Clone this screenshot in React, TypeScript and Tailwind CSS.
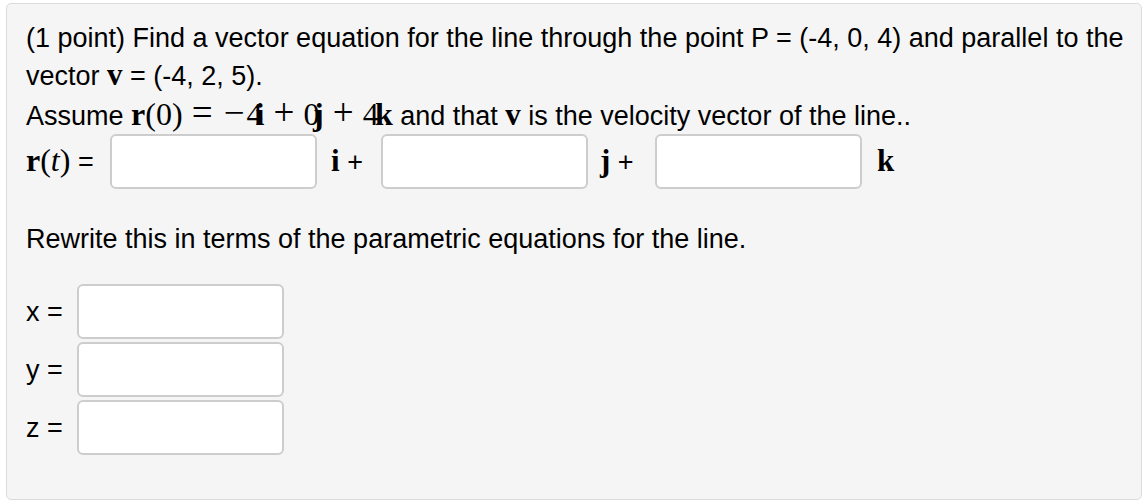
import React from "react";

const sans = { fontFamily: '"Liberation Sans", Arial, sans-serif' };
const serif = { fontFamily: '"Liberation Serif", "Times New Roman", serif' };

function AnswerBox() {
  return (
    <input
      type="text"
      className="h-[55px] w-[207px] shrink-0 rounded-[6px] border-2 border-[#cdcdcd] bg-white outline-none"
    />
  );
}

// wide math operator, roughly the TeX width
function Op({ children, space }: { children: React.ReactNode; space?: boolean }) {
  return (
    <span
      className={
        space
          ? "inline-block w-[25px] mx-[7px] text-center text-[37px] leading-[0]"
          : "inline-block w-[25px] text-center text-[37px] leading-[0]"
      }
    >
      {children}
    </span>
  );
}

function Vec({ children, className = "" }: { children: React.ReactNode; className?: string }) {
  return (
    <b className={"font-bold text-[31px] leading-none " + className} style={serif}>
      {children}
    </b>
  );
}

export default function App() {
  return (
    <div className="w-[1148px] h-[502px] bg-white pt-[3px] px-[6px] text-black" style={sans}>
      <div className="h-[497px] rounded-[5px] border border-[#dcdcdc] bg-[#f5f5f5] pl-[19px] pr-[8px] pt-[15px] text-[27px] leading-[38px]">
        <p>
          (1 point) Find a vector equation for the line through the point P = (-4, 0, 4) and parallel to the
          vector <Vec>v</Vec> = (-4, 2, 5).
        </p>
        <p className="h-[38px] pt-[2px]">
          Assume{" "}
          <span className="text-[32px] leading-none" style={serif}>
            <b>r</b>(0)
            <Op space>=</Op>
            <Op>−</Op>4<b className="-ml-[0.22em]">i</b>
            <Op space>+</Op>0<b className="-ml-[0.2em]">j</b>
            <Op space>+</Op>4<b className="-ml-[0.12em]">k</b>
          </span>{" "}
          and that <Vec>v</Vec> is the velocity vector of the line..
        </p>
        <div className="mt-[1px] flex items-center">
          <span className="w-[84px] shrink-0">
            <span className="text-[32px] leading-none" style={serif}>
              <b>r</b>(<i>t</i>)
            </span>{" "}
            =
          </span>
          <AnswerBox />
          <span className="w-[64px] shrink-0 pl-[14px]">
            <Vec>i</Vec> +
          </span>
          <AnswerBox />
          <span className="w-[67px] shrink-0 pl-[12px]">
            <Vec>j</Vec> +
          </span>
          <AnswerBox />
          <span className="pl-[15px]">
            <Vec>k</Vec>
          </span>
        </div>
        <p className="mt-[31px]">Rewrite this in terms of the parametric equations for the line.</p>
        <div className="mt-[26px] flex flex-col gap-[3px]">
          {["x", "y", "z"].map((v) => (
            <div key={v} className="flex items-center">
              <span className="w-[51px] shrink-0">{v} =</span>
              <AnswerBox />
            </div>
          ))}
        </div>
      </div>
    </div>
  );
}
